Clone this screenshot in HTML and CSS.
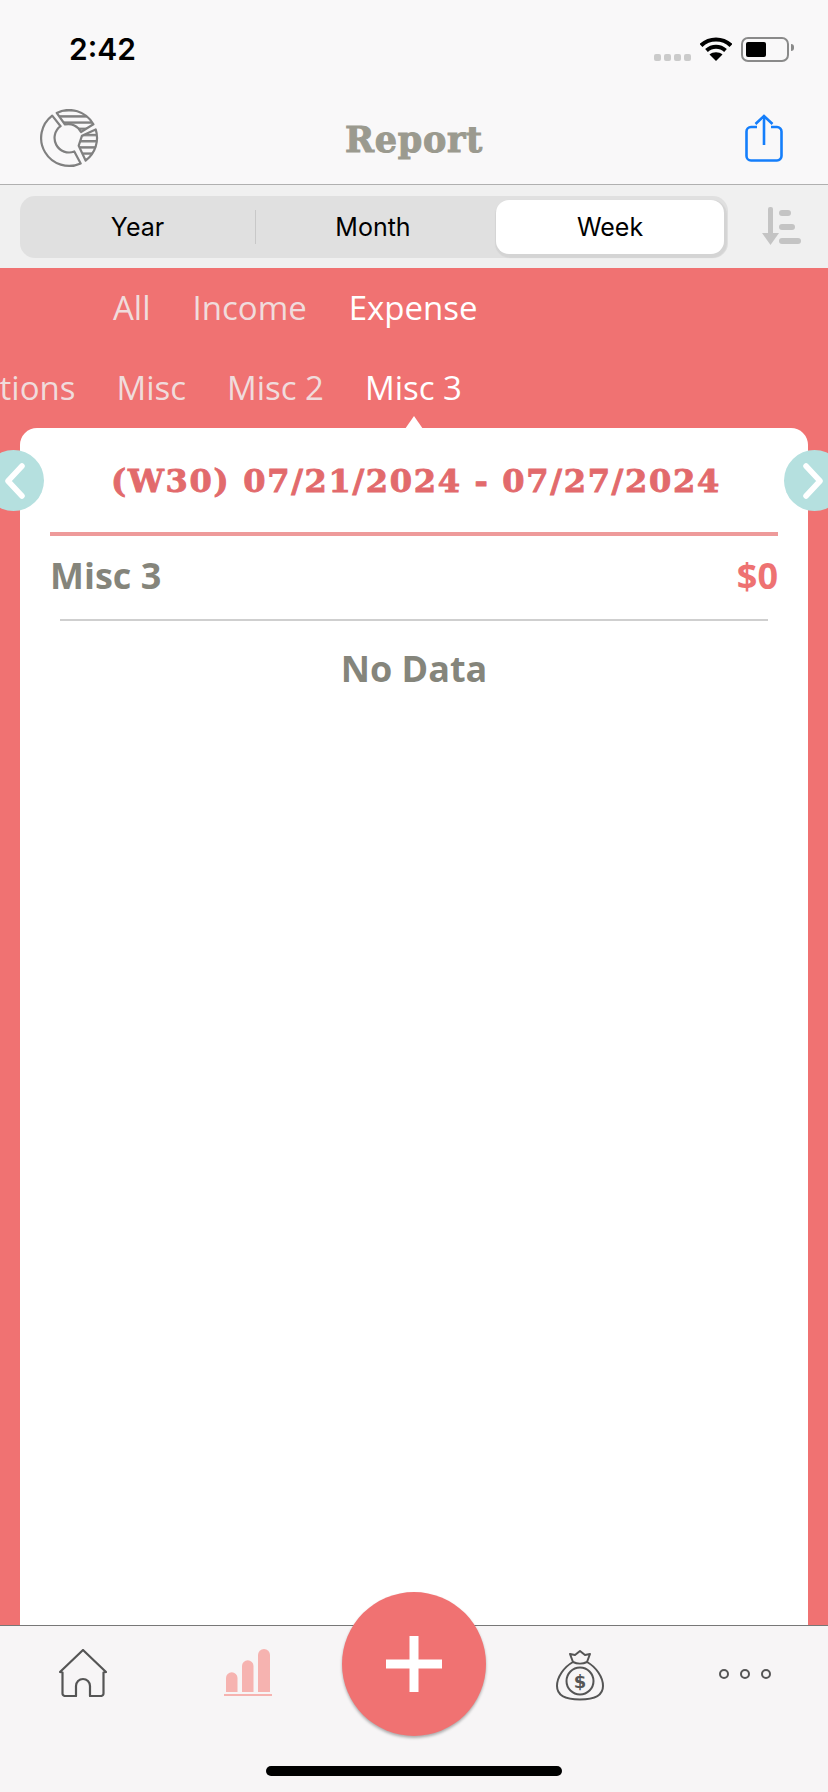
FILE: index.html
```html
<!DOCTYPE html>
<html lang="en">
<head>
    <meta charset="UTF-8">
    <meta name="viewport" content="width=device-width, initial-scale=1.0">
    <title>Report</title>
    <link rel="stylesheet" href="styles.css">
</head>
<body>
    <div id="app">
        <header class="top">
            <div class="status">
                <span class="clock">2:42</span>
                <div class="status-icons">
                    <span class="signal"><i></i><i></i><i></i><i></i></span>
                    <svg class="wifi" width="32" height="24" viewBox="0 0 32 24">
                        <path d="M1 8.5 C9.5 0.5 22.500 0.5 31 8.500" fill="none" stroke="#000" stroke-width="4.200"/>
                        <path d="M6.500 13.500 C12 8.500 20 8.500 25.500 13.500" fill="none" stroke="#000" stroke-width="4"/>
                        <path d="M16 24 L9.500 17.500 C13 14.500 19 14.500 22.500 17.500 Z" fill="#000"/>
                    </svg>
                    <span class="battery"><i></i></span>
                </div>
            </div>
            <nav class="navbar">
                <svg class="pie" width="60" height="60" viewBox="0 0 60 60">
                    <defs>
                        <pattern id="hatch" width="6" height="6.200" patternUnits="userSpaceOnUse">
                            <rect width="6" height="2.400" fill="#808080"/>
                        </pattern>
                    </defs>
                    <path d="M12.200 6.600 A28 28 0 0 0 40.700 54.400 L34.300 42.500 A14.500 14.500 0 0 1 20.600 17.200 Z" fill="none" stroke="#808080" stroke-width="2.200" stroke-linejoin="round"/>
                    <path d="M16.700 3.900 A28 28 0 0 1 53.400 15.300 L41 23 A14 14 0 0 0 25 15.500 Z" fill="url(#hatch)" stroke="#808080" stroke-width="2.200" stroke-linejoin="round"/>
                    <path d="M55.700 20.400 A28 28 0 0 1 45.600 51.500 L38.700 36.700 L42 26.700 Z" fill="url(#hatch)" stroke="#808080" stroke-width="2.200" stroke-linejoin="round"/>
                </svg>
                <h1 class="title">Report</h1>
                <svg class="share" width="38" height="48" viewBox="0 0 38 48">
                    <path d="M12 13 H6 A4.500 4.500 0 0 0 1.500 17.500 V42 A4.500 4.500 0 0 0 6 46.500 H32 A4.500 4.500 0 0 0 36.500 42 V17.500 A4.500 4.500 0 0 0 32 13 H26" fill="none" stroke="#147efb" stroke-width="2.600"/>
                    <path d="M19 2 V31 M10.500 10 L19 2 L27.500 10" fill="none" stroke="#147efb" stroke-width="2.600"/>
                </svg>
            </nav>
        </header>

        <div class="range-bar">
            <div class="segments">
                <span class="segment">Year</span>
                <span class="segment divided">Month</span>
                <span class="segment selected">Week</span>
            </div>
            <svg class="sort" width="40" height="40" viewBox="0 0 40 40" fill="#c4c4c4">
                <rect x="6" y="0" width="5" height="30" rx="2"/>
                <path d="M0 26 H17 L8.500 38 Z"/>
                <rect x="17" y="3" width="12" height="6" rx="3"/>
                <rect x="17" y="17" width="16" height="6" rx="3"/>
                <rect x="17" y="31" width="22" height="6" rx="3"/>
            </svg>
        </div>

        <main class="report">
            <div class="tabs tabs-type">
                <span class="tab">All</span>
                <span class="tab">Income</span>
                <span class="tab active">Expense</span>
            </div>
            <div class="tabs tabs-category">
                <span class="tab">Donations</span>
                <span class="tab">Misc</span>
                <span class="tab">Misc 2</span>
                <span class="tab active">Misc 3</span>
            </div>

            <section class="card">
                <span class="pointer"></span>
                <button class="pager prev">
                    <svg width="24" height="36" viewBox="0 0 24 36"><path d="M19 3 L5 18 L19 33" fill="none" stroke="#fff" stroke-width="5.500" stroke-linecap="round" stroke-linejoin="round"/></svg>
                </button>
                <button class="pager next">
                    <svg width="24" height="36" viewBox="0 0 24 36"><path d="M5 3 L19 18 L5 33" fill="none" stroke="#fff" stroke-width="5.500" stroke-linecap="round" stroke-linejoin="round"/></svg>
                </button>

                <h2 class="period">(W30) 07/21/2024 - 07/27/2024</h2>
                <div class="summary">
                    <span>Misc 3</span>
                    <span class="amount">$0</span>
                </div>
                <p class="empty">No Data</p>
            </section>
        </main>

        <footer class="tabbar">
            <div class="tabbar-item">
                <svg width="48" height="48" viewBox="0 0 48 48" fill="none" stroke="#555" stroke-width="2.200" stroke-linejoin="round" stroke-linecap="round">
                    <path d="M1 23 L24 1 L47 23 L44.500 23.500 V44.500 A2.500 2.500 0 0 1 42 47 H31 V37 A7 7 0 0 0 17 37 V47 H6 A2.500 2.500 0 0 1 3.500 44.500 V23.500 Z"/>
                </svg>
            </div>
            <div class="tabbar-item">
                <svg width="48" height="48" viewBox="0 0 48 48" fill="#f6b3b0">
                    <path d="M2 43 V29 A5.500 5.500 0 0 1 13.500 29 V43 Z"/>
                    <path d="M18 43 V17 A5.500 5.500 0 0 1 29.500 17 V43 Z"/>
                    <path d="M34 43 V6 A5.500 5.500 0 0 1 46 6 V43 Z"/>
                    <rect x="0" y="45" width="48" height="2"/>
                </svg>
            </div>
            <div class="tabbar-item"></div>
            <div class="tabbar-item">
                <svg width="48" height="52" viewBox="0 0 48 52" fill="none" stroke="#555" stroke-width="2">
                    <path d="M14 5 L19 6 L24 2 L29 6 L34 5 L31 13 C40 18 47 28 47 37 C47 47 37 50.500 24 50.500 C11 50.500 1 47 1 37 C1 28 8 18 17 13 Z" stroke-linejoin="round"/>
                    <path d="M17 13 C21 15 27 15 31 13"/>
                    <circle cx="24" cy="32" r="13.500"/>
                    <text x="24" y="38.500" class="bag-sign">$</text>
                </svg>
            </div>
            <div class="tabbar-item">
                <div class="more"><i></i><i></i><i></i></div>
            </div>
            <button class="fab">
                <svg width="56" height="56" viewBox="0 0 56 56"><path d="M23.500 0 H32.500 V23.500 H56 V32.500 H32.500 V56 H23.500 V32.500 H0 V23.500 H23.500 Z" fill="#fff"/></svg>
            </button>
            <span class="home-bar"></span>
        </footer>
    </div>
</body>
</html>
```

FILE: styles.css
```css
body {
    margin: 0;
    padding: 0;
    font-family: "Open Sans", Arial, sans-serif;
    background-color: #f9f8f9;
}

#app {
    width: 828px;
    height: 1792px;
    display: flex;
    flex-direction: column;
    overflow: hidden;
    position: relative;
}

/* status bar and title */
.top {
    height: 185px;
    box-sizing: border-box;
    border-bottom: 1px solid #b0b0b0;
    background-color: #f9f8f9;
    flex-shrink: 0;
}

.status {
    height: 92px;
    display: flex;
    justify-content: space-between;
    padding: 33px 39px 0 69px;
    box-sizing: border-box;
}

.clock {
    font-family: Inter, Roboto, sans-serif;
    font-size: 30px;
    font-weight: 600;
    line-height: 33px;
    color: #000;
}

.status-icons {
    display: flex;
    align-items: flex-start;
    gap: 9px;
    padding-top: 4px;
}

.signal {
    display: flex;
    gap: 3px;
    margin-top: 17px;
}

.signal i {
    width: 7px;
    height: 7px;
    border-radius: 2px;
    background-color: #cbcbcb;
}

.battery {
    width: 48px;
    height: 25px;
    box-sizing: border-box;
    border: 2px solid #8a8a8a;
    border-radius: 7px;
    padding: 3px;
    position: relative;
}

.battery i {
    display: block;
    width: 20px;
    height: 15px;
    border-radius: 2px;
    background-color: #000;
}

.battery::after {
    content: "";
    position: absolute;
    top: 5px;
    right: -7px;
    width: 3px;
    height: 7px;
    border-radius: 0 3px 3px 0;
    background-color: #8a8a8a;
}

.navbar {
    height: 92px;
    display: grid;
    grid-template-columns: 1fr auto 1fr;
    align-items: start;
    padding: 17px 40px 0;
    box-sizing: border-box;
}

.title {
    margin: 9px 0 0;
    font-family: "DejaVu Serif", serif;
    font-size: 35px;
    font-weight: bold;
    line-height: 44px;
    letter-spacing: 0.7px;
    -webkit-text-stroke: 1px #9b9a8f;
    color: #9b9a8f;
}

.share {
    margin: 5px 5px 0 0;
    justify-self: end;
}

/* year / month / week picker */
.range-bar {
    height: 83px;
    display: flex;
    align-items: flex-start;
    justify-content: space-between;
    padding: 11px 26px 0 20px;
    box-sizing: border-box;
    background-color: #f0f0f0;
    flex-shrink: 0;
}

.segments {
    width: 708px;
    height: 62px;
    display: grid;
    grid-template-columns: 235px 236px 237px;
    border-radius: 15px;
    background-color: #e0e0e0;
}

.segment {
    display: flex;
    align-items: center;
    justify-content: center;
    font-family: Inter, Roboto, sans-serif;
    font-size: 25px;
    color: #000;
    position: relative;
}

.divided::before {
    content: "";
    position: absolute;
    left: 0;
    top: 14px;
    bottom: 14px;
    width: 1px;
    background-color: #c8c8c8;
}

.selected {
    margin: 4px 4px 4px 5px;
    border-radius: 13px;
    background-color: #fff;
    box-shadow: 1px 2px 1px 2px #d4d4d4;
}

.sort {
    margin-top: 11px;
}

/* red area with the tabs and the white card */
.report {
    flex: 1;
    min-height: 0;
    display: flex;
    flex-direction: column;
    background-color: #f07272;
}

.tabs {
    display: flex;
    gap: 42px;
    height: 80px;
    box-sizing: border-box;
    padding-bottom: 2px;
    align-items: center;
    font-size: 33px;
    font-weight: 500;
    color: #f0dcdc;
    flex-shrink: 0;
    white-space: nowrap;
}

.tabs-type {
    padding-left: 113px;
}

.tabs-category {
    gap: 41px;
    justify-content: flex-end;
    padding-right: 366px;
    overflow: hidden;
}

.tab {
    flex-shrink: 0;
}

.active {
    color: #fff;
}

.card {
    flex: 1;
    margin: 0 20px;
    padding: 0 30px;
    border-radius: 17px 17px 0 0;
    background-color: #fff;
    position: relative;
}

.pointer {
    position: absolute;
    left: 385px;
    top: -12px;
    border-left: 9px solid transparent;
    border-right: 9px solid transparent;
    border-bottom: 13px solid #fff;
}

.pager {
    position: absolute;
    top: 22px;
    width: 61px;
    height: 61px;
    padding: 0;
    border: 0;
    border-radius: 50%;
    background-color: #b5e0df;
    display: flex;
    align-items: center;
    justify-content: center;
}

.prev {
    left: -37px;
    justify-content: flex-end;
    padding-right: 17px;
    box-sizing: border-box;
}

.next {
    right: -37px;
    justify-content: flex-start;
    padding-left: 17px;
    box-sizing: border-box;
}

.period {
    margin: 0;
    height: 108px;
    box-sizing: border-box;
    border-bottom: 4px solid #ee9a9a;
    padding: 31px 0 0 4px;
    text-align: center;
    font-family: "DejaVu Serif", serif;
    font-size: 32px;
    font-weight: bold;
    line-height: 44px;
    letter-spacing: 1.7px;
    -webkit-text-stroke: 0.9px #e26a6c;
    color: #e26a6c;
    white-space: nowrap;
}

.summary {
    display: flex;
    justify-content: space-between;
    height: 85px;
    box-sizing: border-box;
    padding-bottom: 6px;
    align-items: center;
    font-size: 36px;
    font-weight: 700;
    color: #85857b;
    position: relative;
}

.summary::after {
    content: "";
    position: absolute;
    left: 10px;
    right: 10px;
    bottom: 0;
    height: 2px;
    background-color: #cfcfcf;
}

.amount {
    color: #ee7272;
}

.empty {
    margin: 24px 0 0;
    text-align: center;
    font-size: 36px;
    font-weight: 700;
    line-height: 48px;
    color: #85857b;
}

/* bottom tab bar */
.tabbar {
    height: 167px;
    flex-shrink: 0;
    box-sizing: border-box;
    border-top: 1px solid #777;
    background-color: #f7f5f6;
    display: grid;
    grid-template-columns: repeat(5, 1fr);
    position: relative;
}

.tabbar-item {
    display: flex;
    justify-content: center;
    padding-top: 23px;
}

.more {
    display: flex;
    gap: 11px;
    height: 10px;
    margin-top: 20px;
}

.more i {
    width: 10px;
    height: 10px;
    box-sizing: border-box;
    border: 2px solid #555;
    border-radius: 50%;
}

.bag-sign {
    font-family: "DejaVu Sans", sans-serif;
    font-size: 18px;
    font-weight: bold;
    fill: #555;
    stroke: none;
    text-anchor: middle;
}

.fab {
    position: absolute;
    left: 342px;
    top: -34px;
    width: 144px;
    height: 144px;
    padding: 0;
    border: 0;
    border-radius: 50%;
    background-color: #f07272;
    box-shadow: 0 2px 3px rgba(0, 0, 0, 0.3);
    display: flex;
    align-items: center;
    justify-content: center;
}

.home-bar {
    position: absolute;
    left: 266px;
    top: 140px;
    width: 296px;
    height: 10px;
    border-radius: 5px;
    background-color: #000;
}
```
